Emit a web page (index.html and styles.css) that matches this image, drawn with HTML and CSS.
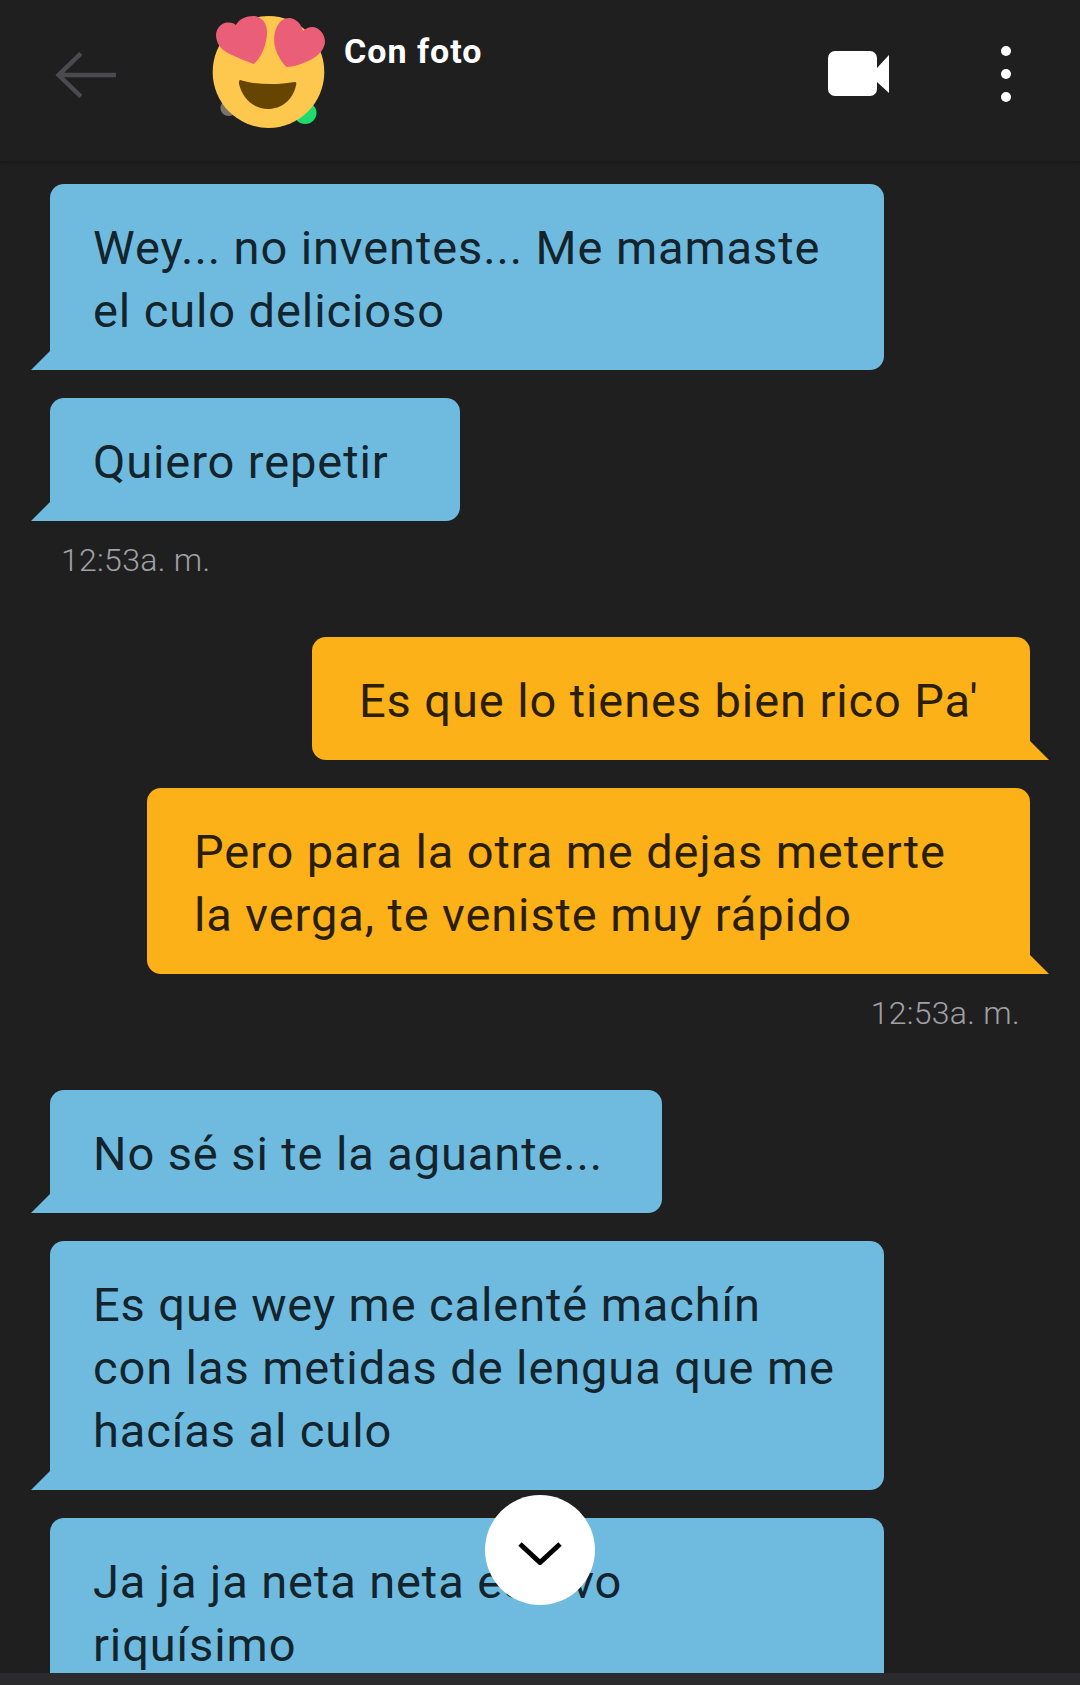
FILE: index.html
```html
<!DOCTYPE html>
<html lang="es">
<head>
    <meta charset="UTF-8">
    <meta name="viewport" content="width=device-width, initial-scale=1.0">
    <title>Con foto</title>
    <link rel="stylesheet" href="styles.css">
</head>
<body>

    <div class="screen">
        <header class="topbar">
            <svg class="back" viewBox="0 0 60 48" preserveAspectRatio="none" aria-label="Volver">
                <path d="M59 24H4M25 2.500 3.500 24 25 45.500" fill="none" stroke="#4b4b4f" stroke-width="4.500"/>
            </svg>

            <svg class="avatar" viewBox="0 0 120 125" preserveAspectRatio="none" aria-label="Avatar">
                <circle cx="21" cy="98" r="8" fill="#7a7468"/>
                <circle cx="95" cy="103" r="11" fill="#1ddb6c"/>
                <ellipse cx="59.500" cy="62" rx="54" ry="56" fill="#fec84e"/>
                <path d="M45 54C51 50 59 34 58 20 57 10 50 6 45 6 38 6 31 9 28 15 24 12 19 12 15 14 10 17 8 23 9 28 10 36 16 41 22 44 30 48 38 51 45 54Z" fill="#ea5f77"/>
                <path d="M77 57C70 50 64 38 65 27 66 15 72 8 80 8 87 9 91 14 93 21 97 17 102 16 106 18 112 21 115 28 114 34 112 42 106 47 98 51 91 54 84 57 77 57Z" fill="#ea5f77"/>
                <path d="M32 70C48 75 68 75 85 72 87 72 86.500 74 86 76 83 90 72 99 59 99 45 99 34 88 31 74 31 72 31 70 32 70Z" fill="#664500"/>
            </svg>

            <div class="title">Con foto</div>

            <svg class="video" viewBox="0 0 62 46" aria-label="Videollamada">
                <rect x="0" y="0" width="49" height="45" rx="7" fill="#fff"/>
                <path d="M49 17 61 4V42L49 31Z" fill="#fff"/>
            </svg>

            <div class="dots">
                <span></span>
                <span></span>
                <span></span>
            </div>
        </header>

        <main class="chat">
            <div class="msg them w-large">Wey... no inventes... Me mamaste<br>el culo delicioso</div>
            <div class="msg them w-small">Quiero repetir</div>
            <div class="time">12:53a. m.</div>

            <div class="msg me w-short">Es que lo tienes bien rico Pa'</div>
            <div class="msg me w-long">Pero para la otra me dejas meterte<br>la verga, te veniste muy rápido</div>
            <div class="time time-me">12:53a. m.</div>

            <div class="msg them w-medium">No sé si te la aguante...</div>
            <div class="msg them w-large">Es que wey me calenté machín<br>con las metidas de lengua que me<br>hacías al culo</div>
            <div class="msg them w-large">Ja ja ja neta neta estuvo<br>riquísimo</div>

            <button class="scroll-down" aria-label="Bajar">
                <svg viewBox="0 0 44 24"><path d="M2 3 22 21.500 42 3" fill="none" stroke="#000" stroke-width="5"/></svg>
            </button>
        </main>

        <div class="bottom-strip"></div>
    </div>

</body>
</html>
```

FILE: styles.css
```css
* {
    margin: 0;
    padding: 0;
    box-sizing: border-box;
}

body {
    font-family: Roboto, "Liberation Sans", sans-serif;
    background-color: #1f1f20;
    color: white;
}

.screen {
    height: 1685px;
    display: flex;
    flex-direction: column;
    overflow: hidden;
}

.topbar {
    height: 162px;
    flex-shrink: 0;
    display: flex;
    align-items: flex-start;
    background: #1f1f20;
    border-bottom: 1px solid #1a1a1b;
    box-shadow: 0 1px 3px rgba(0, 0, 0, 0.2);
    position: relative;
    z-index: 1;
}

.back {
    width: 62px;
    height: 48px;
    margin: 51px 0 0 55px;
}

.avatar {
    width: 124px;
    height: 125px;
    margin: 10px 0 0 90px;
}

.title {
    margin: 29px 0 0 13px;
    font-size: 34px;
    line-height: 44px;
    font-weight: 700;
    letter-spacing: 1px;
}

.video {
    width: 62px;
    height: 46px;
    margin: 51px 0 0 auto;
}

.dots {
    width: 10px;
    margin: 46px 69px 0 111px;
    display: flex;
    flex-direction: column;
    gap: 13px;
}

.dots span {
    width: 10px;
    height: 10px;
    background: white;
    border-radius: 50%;
}

.chat {
    flex: 1;
    position: relative;
    overflow: hidden;
    padding: 22px 50px 0;
    display: flex;
    flex-direction: column;
    align-items: flex-start;
}

.msg {
    position: relative;
    flex-shrink: 0;
    margin-bottom: 28px;
    padding: 32px 0 28px 43px;
    border-radius: 14px;
    font-size: 47px;
    font-weight: 430;
    line-height: 63px;
    letter-spacing: 0.9px;
    white-space: nowrap;
}

.msg::after {
    content: "";
    position: absolute;
    bottom: 0;
    width: 20px;
    height: 20px;
}

.w-small {
    width: 410px;
}

.w-medium {
    width: 612px;
}

.w-short {
    width: 718px;
}

.w-large {
    width: 834px;
}

.w-long {
    width: 883px;
}

.them {
    background: #6fbbdf;
    color: #13242d;
    border-bottom-left-radius: 0;
}

.them::after {
    left: -19px;
    background: #6fbbdf;
    clip-path: polygon(100% 0, 100% 100%, 0 100%);
}

.me {
    align-self: flex-end;
    background: #fdb118;
    color: #2a1e05;
    border-bottom-right-radius: 0;
    padding-left: 47px;
}

.me::after {
    right: -19px;
    background: #fdb118;
    clip-path: polygon(0 0, 100% 100%, 0 100%);
}

.time {
    margin: -10px 0 56px 11px;
    font-size: 32px;
    line-height: 42px;
    font-weight: 300;
    letter-spacing: 0.3px;
    color: #a0a0a6;
}

.time-me {
    align-self: flex-end;
    margin-right: 10px;
}

.scroll-down {
    position: absolute;
    left: 485px;
    top: 1333px;
    width: 110px;
    height: 110px;
    border: none;
    border-radius: 50%;
    background: white;
    display: flex;
    align-items: center;
    justify-content: center;
}

.scroll-down svg {
    width: 44px;
    height: 24px;
    margin-top: 6px;
}

.bottom-strip {
    height: 12px;
    flex-shrink: 0;
    background: #2b2b2e;
}
```
